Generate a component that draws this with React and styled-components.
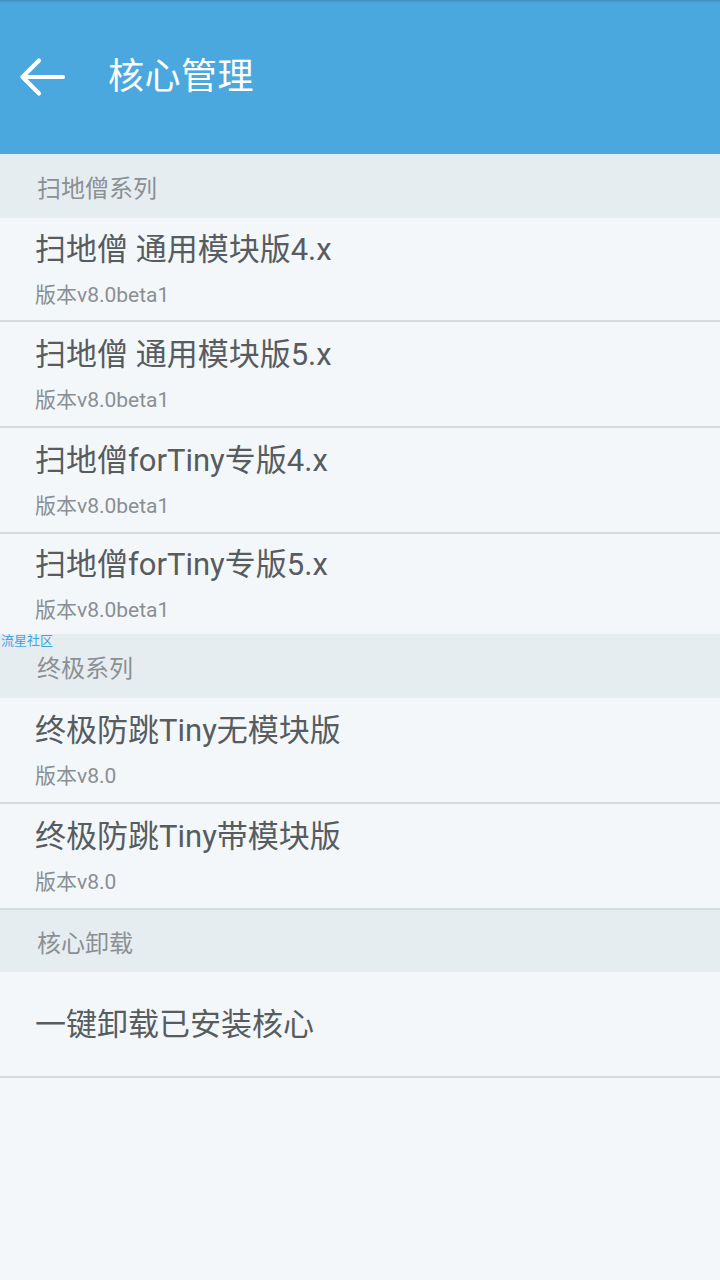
import React from "react";
import styled, { createGlobalStyle } from "styled-components";

const Global = createGlobalStyle`
  html, body { margin: 0; padding: 0; background: #f3f7fa; }
  body { font-family: Roboto, "Noto Sans CJK SC", sans-serif; }
`;

const Page = styled.div`
  width: 720px;
  min-height: 1280px;
  background: #f3f7fa;
  display: flex;
  flex-direction: column;
`;

const Toolbar = styled.header`
  height: 154px;
  background: linear-gradient(#3f8fc2 0, #4a9fd4 2px, #4ba8de 4px, #4ba8de 100%);
  display: flex;
  align-items: center;
  padding-left: 18px;
  gap: 42px;
  box-sizing: border-box;
`;

const BackButton = styled.button`
  width: 48px;
  height: 48px;
  padding: 0;
  border: 0;
  background: none;
  display: flex;
  align-items: center;
  justify-content: center;
`;

const Title = styled.h1`
  margin: 0;
  color: #ffffff;
  font-size: 36px;
  font-weight: 400;
  line-height: 44px;
  letter-spacing: 0.5px;
`;

const SectionHeader = styled.div`
  position: relative;
  height: ${(p) => p.$h || 64}px;
  background: #e6edf0;
  display: flex;
  align-items: center;
  padding-left: 37px;
  font-size: 24px;
  color: #8b9094;
`;

const Watermark = styled.span`
  position: absolute;
  left: 1px;
  top: -1px;
  font-size: 13px;
  line-height: 15px;
  color: #3ea3e6;
`;

const Item = styled.div`
  height: ${(p) => p.$h || 106}px;
  display: flex;
  flex-direction: column;
  justify-content: center;
  gap: 12px;
  padding: 2px 0 0 35px;
  box-sizing: border-box;
  border-bottom: ${(p) => (p.$divider ? "2px solid #d6dbde" : "none")};
`;

const ItemTitle = styled.div`
  font-size: 31px;
  line-height: 38px;
  color: #575c60;
`;

const ItemSub = styled.div`
  font-size: 21px;
  line-height: 28px;
  color: #8a8f93;
`;

const Arrow = () => (
  <svg width="48" height="40" viewBox="0 0 48 40">
    <path
      d="M5 20 H45 M21 3.5 L4.5 20 L21 36.5"
      fill="none"
      stroke="#ffffff"
      strokeWidth="4.2"
      strokeLinecap="round"
      strokeLinejoin="round"
    />
  </svg>
);

const groups = [
  {
    name: "扫地僧系列",
    items: [
      { t: "扫地僧 通用模块版4.x", s: "版本v8.0beta1", d: true, h: 104 },
      { t: "扫地僧 通用模块版5.x", s: "版本v8.0beta1", d: true },
      { t: "扫地僧forTiny专版4.x", s: "版本v8.0beta1", d: true },
      { t: "扫地僧forTiny专版5.x", s: "版本v8.0beta1", d: false, h: 100 },
    ],
  },
  {
    name: "终极系列",
    watermark: "流星社区",
    items: [
      { t: "终极防跳Tiny无模块版", s: "版本v8.0", d: true },
      { t: "终极防跳Tiny带模块版", s: "版本v8.0", d: true },
    ],
  },
  {
    name: "核心卸载",
    h: 62,
    items: [{ t: "一键卸载已安装核心", d: true }],
  },
];

export default function App() {
  return (
    <>
      <Global />
      <Page>
        <Toolbar>
          <BackButton aria-label="返回">
            <Arrow />
          </BackButton>
          <Title>核心管理</Title>
        </Toolbar>
        {groups.map((g) => (
          <section key={g.name}>
            <SectionHeader $h={g.h}>
              {g.watermark && <Watermark>{g.watermark}</Watermark>}
              {g.name}
            </SectionHeader>
            {g.items.map((it) => (
              <Item key={it.t} $divider={it.d} $h={it.h}>
                <ItemTitle>{it.t}</ItemTitle>
                {it.s && <ItemSub>{it.s}</ItemSub>}
              </Item>
            ))}
          </section>
        ))}
      </Page>
    </>
  );
}
